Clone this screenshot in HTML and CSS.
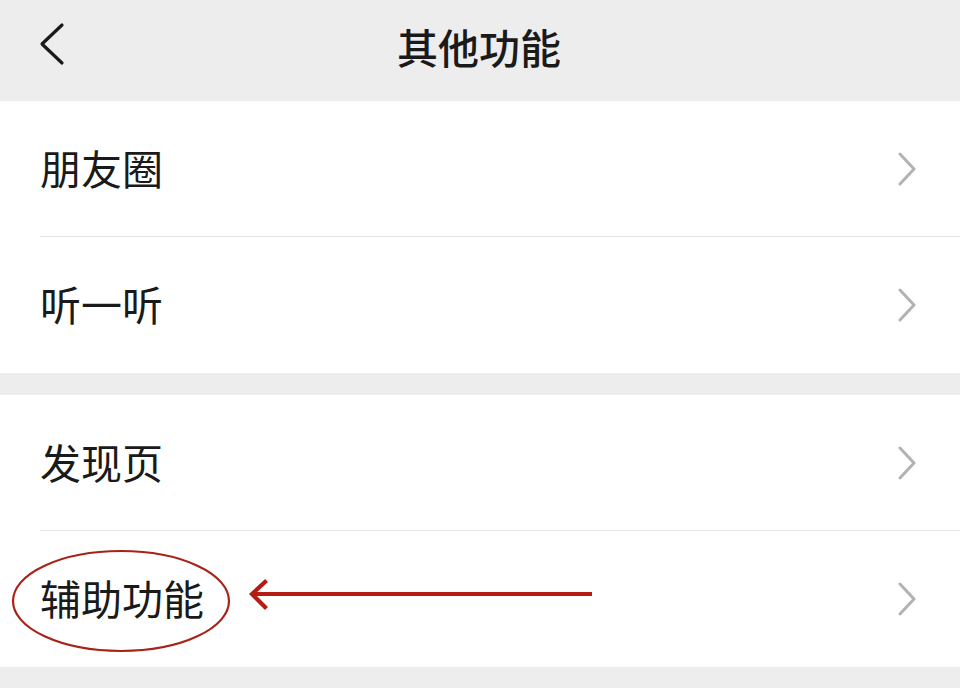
FILE: index.html
```html
<!DOCTYPE html>
<html lang="zh-CN">
<head>
  <meta charset="UTF-8">
  <title>其他功能</title>
  <link rel="stylesheet" href="styles.css">
</head>
<body>
  <div class="page">
    <!-- 顶部栏 -->
    <div class="topbar">
      <svg class="back" width="30" height="44" viewBox="0 0 30 44">
        <polyline points="26,3 6,22 26,41" fill="none" stroke="#1a1a1a" stroke-width="3.2" stroke-linecap="round" stroke-linejoin="round"/>
      </svg>
      <div class="title">其他功能</div>
    </div>

    <div class="group">
      <div class="row">
        <div class="row-inner">
          <span class="label">朋友圈</span>
          <svg class="arrow" width="22" height="34" viewBox="0 0 22 34"><polyline points="3,2 17,17 3,32" fill="none" stroke="#b2b2b2" stroke-width="3" stroke-linecap="round" stroke-linejoin="round"/></svg>
        </div>
      </div>
      <div class="row">
        <div class="row-inner">
          <span class="label">听一听</span>
          <svg class="arrow" width="22" height="34" viewBox="0 0 22 34"><polyline points="3,2 17,17 3,32" fill="none" stroke="#b2b2b2" stroke-width="3" stroke-linecap="round" stroke-linejoin="round"/></svg>
        </div>
      </div>
    </div>

    <div class="group">
      <div class="row">
        <div class="row-inner">
          <span class="label">发现页</span>
          <svg class="arrow" width="22" height="34" viewBox="0 0 22 34"><polyline points="3,2 17,17 3,32" fill="none" stroke="#b2b2b2" stroke-width="3" stroke-linecap="round" stroke-linejoin="round"/></svg>
        </div>
      </div>
      <div class="row">
        <div class="row-inner">
          <span class="label">辅助功能</span>
          <svg class="arrow" width="22" height="34" viewBox="0 0 22 34"><polyline points="3,2 17,17 3,32" fill="none" stroke="#b2b2b2" stroke-width="3" stroke-linecap="round" stroke-linejoin="round"/></svg>
        </div>
      </div>
    </div>

    <!-- 红色标注 -->
    <svg class="mark" width="960" height="688" viewBox="0 0 960 688">
      <ellipse cx="121" cy="601" rx="108" ry="50" fill="none" stroke="#a82218" stroke-width="2.2"/>
      <line x1="253" y1="594" x2="592" y2="594" stroke="#b51d14" stroke-width="4.2"/>
      <polyline points="265,582 252,594 265,607" fill="none" stroke="#b51d14" stroke-width="4.2" stroke-linecap="square"/>
    </svg>
  </div>
</body>
</html>
```

FILE: styles.css
```css
html, body {
  margin: 0;
  padding: 0;
}

body {
  background: #ededed;
  font-family: "Noto Sans CJK SC", "Noto Sans", sans-serif;
  color: #1a1a1a;
}

.page {
  position: relative;
  width: 960px;
  height: 688px;
  overflow: hidden;
}

.topbar {
  position: relative;
  height: 101px;
  display: flex;
  align-items: center;
  justify-content: center;
}

.back {
  position: absolute;
  left: 36px;
  top: 22px;
}

.title {
  font-size: 41px;
  font-weight: 500;
  margin-top: -10px;
  margin-left: -2px;
}

.group {
  background: #fff;
}

.group + .group {
  margin-top: 22px;
}

.row {
  padding-left: 40px;
}

.row-inner {
  height: 135px;
  display: flex;
  align-items: center;
  justify-content: space-between;
  padding-right: 41px;
  border-bottom: 1px solid #e5e5e5;
}

.row:last-child .row-inner {
  border-bottom: none;
  height: 136px;
}

.label {
  font-size: 41px;
  line-height: 1;
  margin-top: -3px;
}

.mark {
  position: absolute;
  left: 0;
  top: 0;
  pointer-events: none;
}
```
